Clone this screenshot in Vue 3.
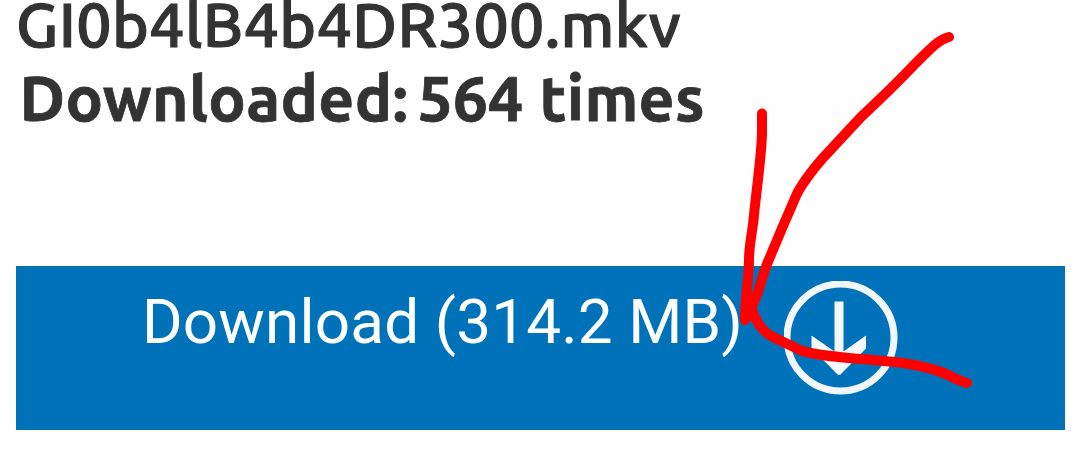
<template>
  <div class="page">
    <div class="info">
      <div class="file-name">{{ fileName }}</div>
      <div class="counter">
        <span class="label">Downloaded:</span>
        <span class="count">{{ count }}</span>
        <span class="unit">times</span>
      </div>
    </div>
    <button class="download" type="button">
      <span class="download-text">Download ({{ size }})</span>
      <svg class="download-icon" viewBox="0 0 114 114">
        <circle cx="56.5" cy="56.5" r="53.5" fill="none" stroke="#f1f7fc" stroke-width="7" />
        <path d="M50.500 20.500h9v50l22.500-16v13L58 92q-3 4-6 0L27.500 67v-12.500l23 16z" fill="#f4f9fd" />
      </svg>
    </button>
    <svg class="marker" viewBox="0 0 1079 454">
      <path d="M762 113.500V134C761 160 757 185 754 215C753 230 749 243 749 260C749 277 745 298 745 320" />
      <path d="M949 37C938 40 932 47 914 65C894 86 890 90 861 117L822 159C813 169 799 188 796 196L783 226L767 264C763 274 758 295 753 304L745 320" />
      <path d="M750 305C756 321 761 331 773 337L800 350C815 357 870 359 903 363C922 366 940 370 952 377Q960 381 967 383" />
    </svg>
  </div>
</template>

<script setup>
import { ref } from 'vue';

const fileName = ref('GI0b4lB4b4DR300.mkv');
const count = ref(564);
const size = ref('314.2 MB');
</script>

<style>
body {
  margin: 0;
  background: #fefefe;
}
</style>

<style scoped>
.page {
  position: relative;
  width: 1079px;
  height: 454px;
  overflow: hidden;
  display: flex;
  flex-direction: column;
  background: #fefefe;
}
.info {
  height: 266px;
  flex-shrink: 0;
  padding: 0 16px;
  color: #333;
  font-family: Ubuntu, 'Noto Sans', sans-serif;
  font-size: 62.5px;
  line-height: 48px;
  white-space: nowrap;
}
.file-name {
  font-weight: 500;
  letter-spacing: 0.4px;
  -webkit-text-stroke: 1.2px #333;
}
.counter {
  display: flex;
  margin: 26px 0 0 3.5px;
  font-weight: 700;
  -webkit-text-stroke: 0.8px #333;
}
.label {
  width: 398px;
  letter-spacing: 0.35px;
}
.count {
  width: 122px;
}
.unit {
  letter-spacing: 0.3px;
}
.download {
  display: flex;
  align-items: flex-start;
  flex-shrink: 0;
  height: 164px;
  margin: 0 14px 0 16px;
  padding: 0 0 0 126px;
  border: none;
  background: #0072ba;
  color: #fff;
  cursor: pointer;
}
.download-text {
  width: 642px;
  font-family: Roboto, sans-serif;
  font-size: 62px;
  line-height: 112px;
  letter-spacing: 0.16px;
  text-align: left;
  white-space: nowrap;
}
.download-icon {
  width: 114px;
  height: 114px;
  margin-top: 15px;
  filter: blur(0.7px);
}
.marker {
  position: absolute;
  inset: 0;
  pointer-events: none;
}
.marker path {
  fill: none;
  stroke: #f00;
  stroke-width: 10;
  stroke-linecap: round;
  stroke-linejoin: round;
}
</style>
